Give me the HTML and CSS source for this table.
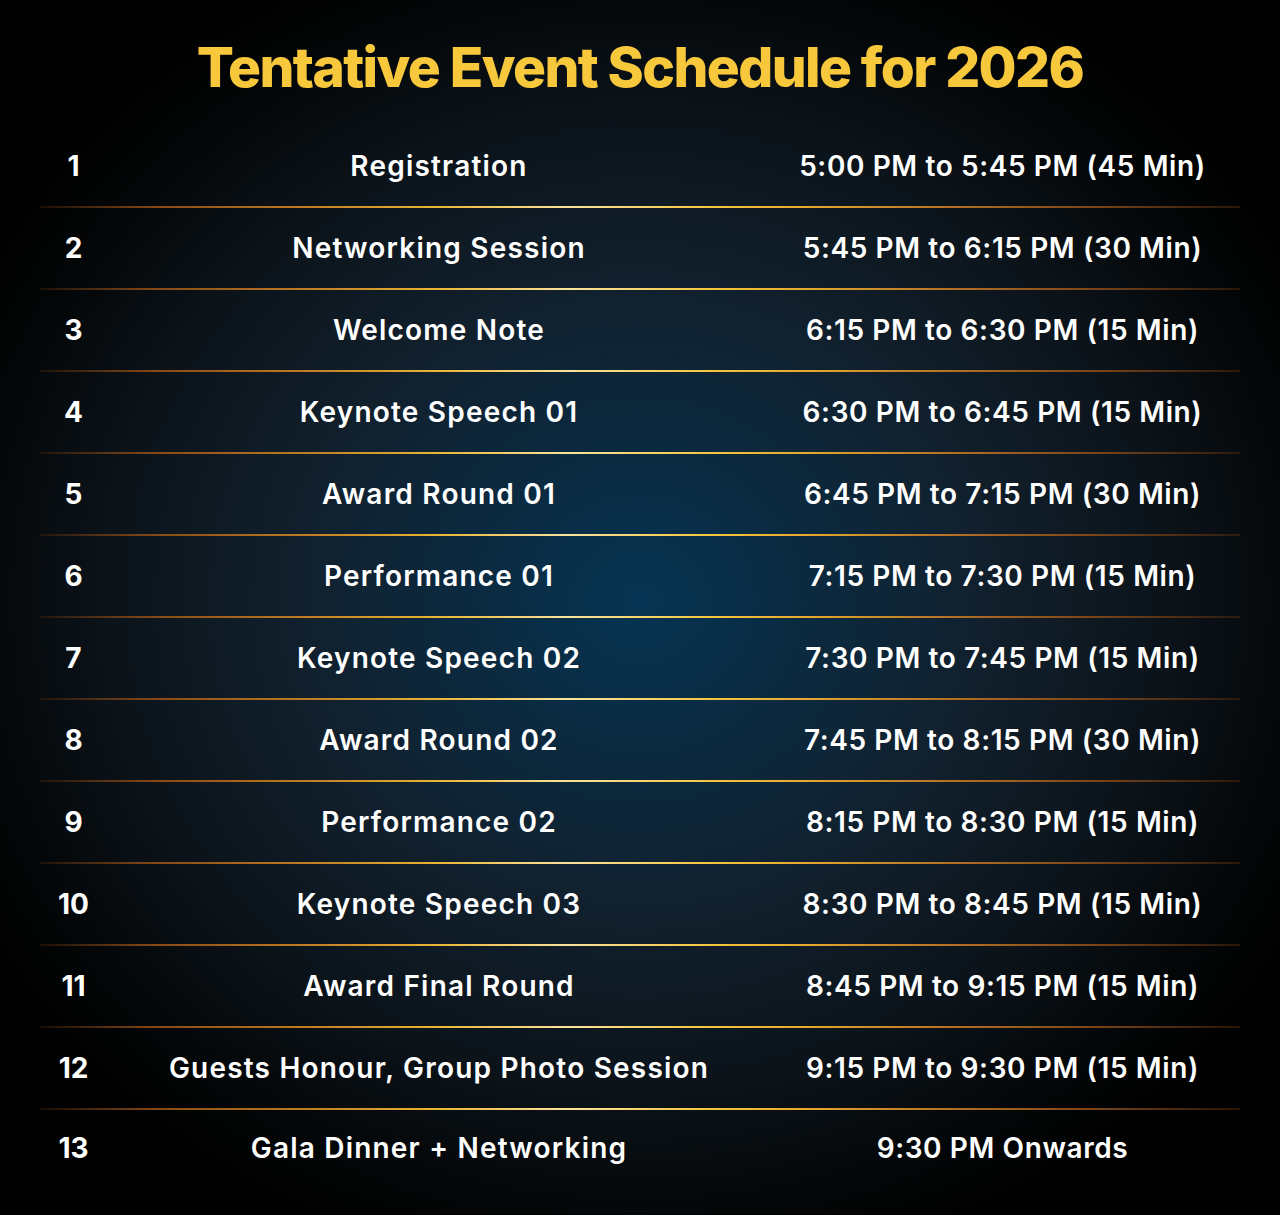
FILE: index.html
```html
<!DOCTYPE html>
<html lang="en">
<head>
<meta charset="utf-8">
<title>Tentative Event Schedule for 2026</title>
<link rel="stylesheet" href="styles.css">
</head>
<body>
<main class="page">
  <h1 class="title">Tentative Event Schedule for 2026</h1>
  <div class="schedule">
    <div class="row"><span class="num">1</span><span class="item">Registration</span><span class="time">5:00 PM to 5:45 PM (45 Min)</span></div>
    <div class="row"><span class="num">2</span><span class="item">Networking Session</span><span class="time">5:45 PM to 6:15 PM (30 Min)</span></div>
    <div class="row"><span class="num">3</span><span class="item">Welcome Note</span><span class="time">6:15 PM to 6:30 PM (15 Min)</span></div>
    <div class="row"><span class="num">4</span><span class="item">Keynote Speech 01</span><span class="time">6:30 PM to 6:45 PM (15 Min)</span></div>
    <div class="row"><span class="num">5</span><span class="item">Award Round 01</span><span class="time">6:45 PM to 7:15 PM (30 Min)</span></div>
    <div class="row"><span class="num">6</span><span class="item">Performance 01</span><span class="time">7:15 PM to 7:30 PM (15 Min)</span></div>
    <div class="row"><span class="num">7</span><span class="item">Keynote Speech 02</span><span class="time">7:30 PM to 7:45 PM (15 Min)</span></div>
    <div class="row"><span class="num">8</span><span class="item">Award Round 02</span><span class="time">7:45 PM to 8:15 PM (30 Min)</span></div>
    <div class="row"><span class="num">9</span><span class="item">Performance 02</span><span class="time">8:15 PM to 8:30 PM (15 Min)</span></div>
    <div class="row"><span class="num">10</span><span class="item">Keynote Speech 03</span><span class="time">8:30 PM to 8:45 PM (15 Min)</span></div>
    <div class="row"><span class="num">11</span><span class="item">Award Final Round</span><span class="time">8:45 PM to 9:15 PM (15 Min)</span></div>
    <div class="row"><span class="num">12</span><span class="item">Guests Honour, Group Photo Session</span><span class="time">9:15 PM to 9:30 PM (15 Min)</span></div>
    <div class="row last"><span class="num">13</span><span class="item">Gala Dinner + Networking</span><span class="time">9:30 PM Onwards</span></div>
  </div>
</main>
</body>
</html>
```
FILE: styles.css
```css
* { box-sizing: border-box; }
html, body { margin: 0; padding: 0; }
body {
  width: 1280px;
  height: 1215px;
  overflow: hidden;
  background: radial-gradient(ellipse 760px 700px at 640px 600px, #063453 0%, #0b2a40 22%, #11202d 45%, #0c141b 68%, #030506 90%, #000 100%);
  font-family: "Inter", "Noto Sans", sans-serif;
  color: #ffffff;
}
.page {
  width: 1200px;
  margin: 0 auto;
}
.title {
  margin: 0;
  height: 126px;
  padding-top: 35px;
  text-align: center;
  font-size: 55px;
  line-height: 64px;
  font-weight: 800;
  letter-spacing: -1.6px;
  color: #f7c73c;
}
.row {
  position: relative;
  display: grid;
  grid-template-columns: 67px 664px 463px;
  align-items: center;
  height: 82px;
  padding-bottom: 3px;
  font-size: 28px;
  font-weight: 600;
}
.row::after {
  content: "";
  position: absolute;
  left: 0;
  right: 0;
  bottom: 0;
  height: 2px;
  background: linear-gradient(90deg, rgba(120,60,15,0.2) 0%, #8a4a16 10%, #c07c22 22%, #eab534 33%, #ffe39c 44%, #f6c53e 56%, #e6a82e 64%, #b57024 76%, #7a4418 88%, rgba(80,40,12,0.5) 100%);
}
.row.last { padding-bottom: 6px; }
.row.last::after { display: none; }
.num, .item, .time { text-align: center; }
.num { font-weight: 700; }
.item { letter-spacing: 1.2px; }
.time { letter-spacing: 0.6px; }
```
